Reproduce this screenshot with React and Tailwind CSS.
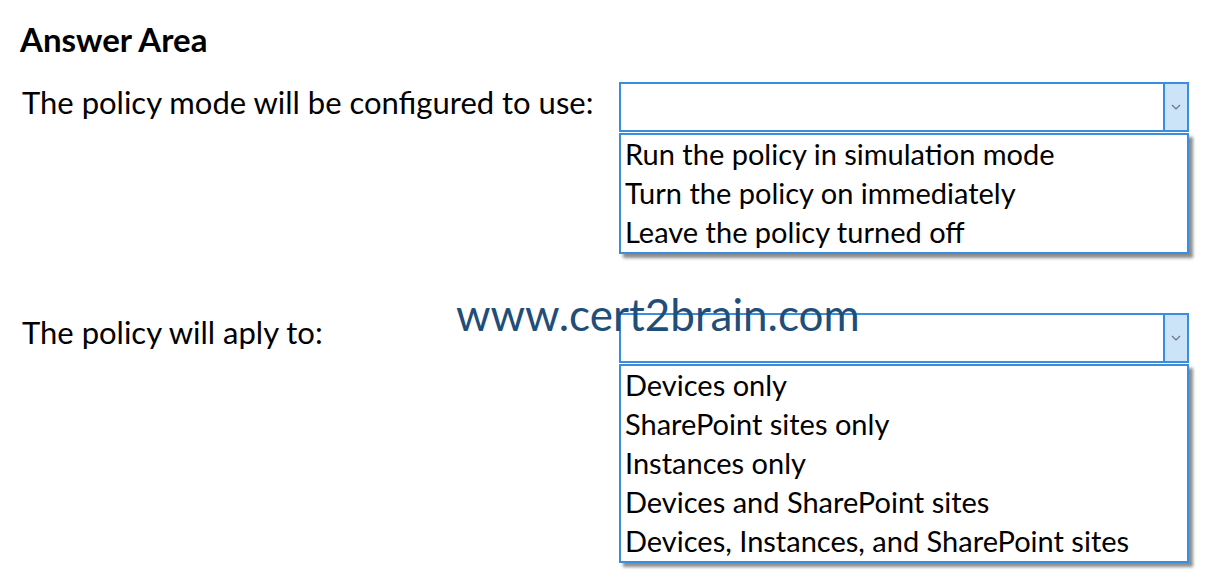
import React from "react";

const FONT = { fontFamily: "Lato, 'Open Sans', sans-serif" };

function Chevron() {
  return (
    <svg width="12" height="8" viewBox="0 0 12 8" fill="none">
      <path d="M2 2 L6 6 L10 2" stroke="#6b7280" strokeWidth="1.2" />
    </svg>
  );
}

function Dropdown({ options }) {
  return (
    <div className="w-[570px]">
      <div className="flex h-[50px] border-2 border-[#3b8de0] bg-white">
        <div className="flex-1" />
        <div className="flex w-[24px] items-center justify-center border-l-2 border-[#3b8de0] bg-[#cce4f7]">
          <Chevron />
        </div>
      </div>
      <ul className="mt-[1px] border-2 border-[#3b8de0] bg-white py-0 shadow-[4px_4px_3px_rgba(0,0,0,0.45)]">
        {options.map((o) => (
          <li key={o} className="h-[39px] pl-[4px] text-[29px] leading-[38px] text-black">
            {o}
          </li>
        ))}
      </ul>
    </div>
  );
}

export default function App() {
  return (
    <div className="relative h-[585px] w-[1217px] overflow-hidden bg-white" style={FONT}>
      <div className="px-[20px] pt-[20px]">
        <h1 className="text-[33px] font-bold leading-[38px] text-black">Answer Area</h1>

        <div className="mt-[24px] flex items-start">
          <div className="w-[599px] pl-[2px] pt-[1px] text-[31px] leading-[38px] text-black">
            The policy mode will be configured to use:
          </div>
          <Dropdown
            options={[
              "Run the policy in simulation mode",
              "Turn the policy on immediately",
              "Leave the policy turned off",
            ]}
          />
        </div>

        <div className="mt-[59px] flex items-start">
          <div className="w-[599px] pl-[2px] pt-[0px] text-[31px] leading-[38px] text-black">
            The policy will aply to:
          </div>
          <Dropdown
            options={[
              "Devices only",
              "SharePoint sites only",
              "Instances only",
              "Devices and SharePoint sites",
              "Devices, Instances, and SharePoint sites",
            ]}
          />
        </div>
      </div>

      <div className="pointer-events-none absolute left-[456px] top-[288px] text-[44px] leading-[52px] text-[#1f4e79]">
        www.cert2brain.com
      </div>
    </div>
  );
}
